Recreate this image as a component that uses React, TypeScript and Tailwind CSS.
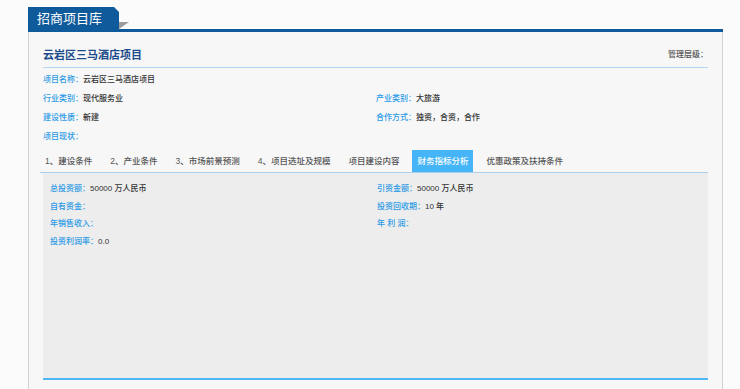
import React from 'react'

const font = "[font-family:'Liberation_Sans','Noto_Sans_CJK_SC',sans-serif]"

const tabs = ['1、建设条件', '2、产业条件', '3、市场前景预测', '4、项目选址及规模', '项目建设内容', '财务指标分析', '优惠政策及扶持条件']

function Field({ label, value }: { label: string; value?: string }) {
  return (
    <div className="flex items-center whitespace-nowrap font-medium">
      <span className="text-[#2c9ae6]">{label}</span>
      <span className="text-[#333]">{value}</span>
    </div>
  )
}

export default function App() {
  return (
    <div className={`min-h-screen bg-[#fbfbfb] pt-[7px] ${font}`}>
      <div className="ml-[28px] w-[695px]">
        {/* header tab */}
        <div className="flex items-end">
          <div className="h-[22px] w-[91px] bg-[#0f5a9b] pl-[9px] text-[13px] leading-[23px] text-white [clip-path:polygon(0_0,86px_0,100%_5px,100%_100%,0_100%)]">
            招商项目库
          </div>
          <div className="h-[7px] w-[10px] bg-[#9c9c9c] [clip-path:polygon(0_0,100%_0,0_100%)]" />
        </div>
        <div className="h-[3px] bg-[#0f5a9b]" />

        <div className="h-[360px] border-x border-[#d2d2d2] bg-[#f7f7f7] px-[14px]">
          {/* title row */}
          <div className="flex items-center justify-between border-b border-[#b4d6f3] pt-[13px] pb-[2px]">
            <h1 className="text-[11px] font-bold leading-[20px] text-[#1c4c8c]">云岩区三马酒店项目</h1>
            <span className="text-[8px] font-medium text-[#555]">管理层级：</span>
          </div>

          {/* basic info */}
          <div className="mt-[2px] grid grid-cols-[333px_1fr] text-[8px] [&>div]:h-[19px]">
            <Field label="项目名称：" value="云岩区三马酒店项目" />
            <div />
            <Field label="行业类别：" value="现代服务业" />
            <Field label="产业类别：" value="大旅游" />
            <Field label="建设性质：" value="新建" />
            <Field label="合作方式：" value="独资，合资，合作" />
            <Field label="项目现状：" />
          </div>

          {/* tabs */}
          <div className="mt-[4px] -ml-[3px] flex gap-[8px] border-b border-[#a9d0f0]">
            {tabs.map((t) => (
              <div
                key={t}
                className={
                  t === '财务指标分析'
                    ? 'flex h-[22px] items-center bg-[#46b5f7] px-[5px] text-[8.5px] font-medium text-white'
                    : 'flex h-[22px] items-center px-[5px] text-[8.5px] font-medium text-[#555]'
                }
              >
                {t}
              </div>
            ))}
          </div>

          {/* panel */}
          <div className="h-[207px] border-b-2 border-[#4cb9f5] bg-[#ededed] pt-[7px] pl-[7px]">
            <div className="grid grid-cols-[327px_1fr] text-[8px] [&>div]:h-[17.7px]">
              <Field label="总投资额：" value="50000 万人民币" />
              <Field label="引资金额：" value="50000 万人民币" />
              <Field label="自有资金：" />
              <Field label="投资回收期：" value="10 年" />
              <Field label="年销售收入：" />
              <Field label="年 利 润：" />
              <Field label="投资利润率：" value="0.0" />
            </div>
          </div>
        </div>
      </div>
    </div>
  )
}
